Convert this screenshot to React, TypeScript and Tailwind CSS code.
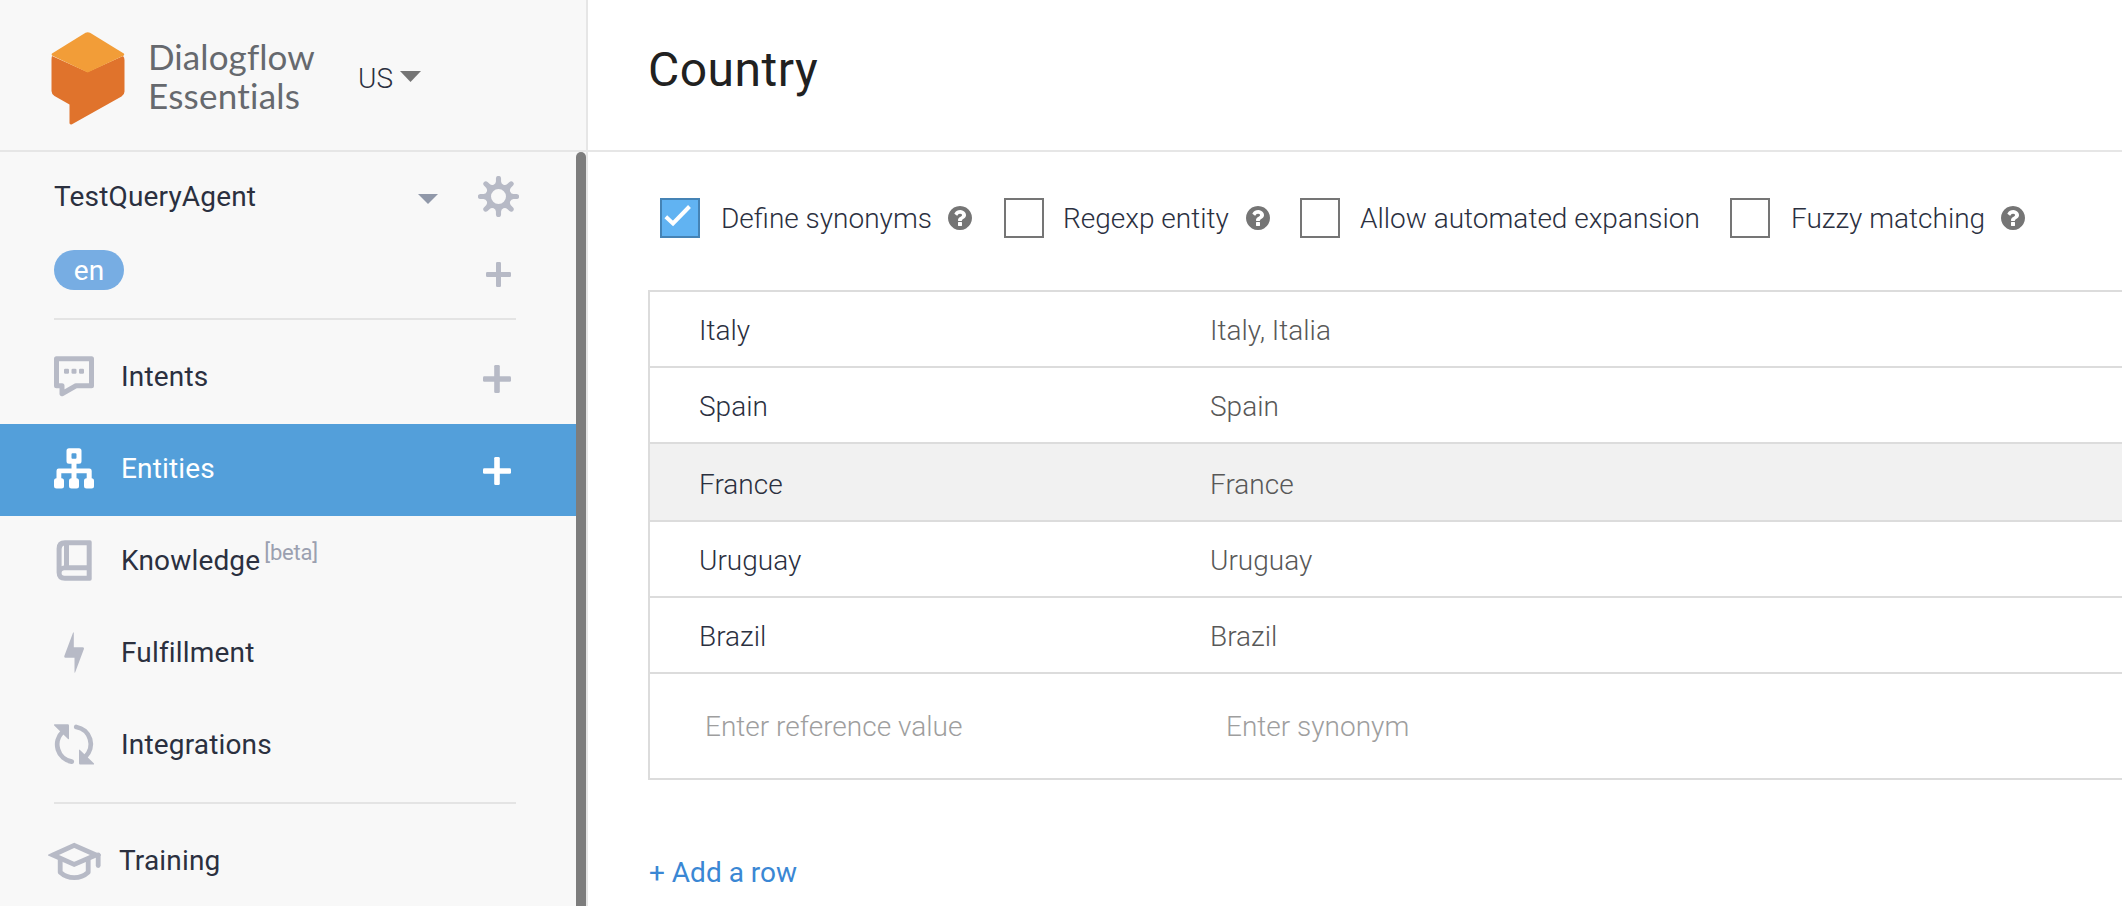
import type { ReactNode } from "react";

function Logo() {
  return (
    <svg width="74" height="93" viewBox="0 0 74 93" className="shrink-0">
      <path
        d="M1 24 L36.5 40 L72 24 Q73.5 25.500 73.500 28 V59.500 Q73.500 62.500 70.500 64.500 L21 92.300 Q18.500 93 18.500 91 V72.500 L3.500 64 Q.5 62 .5 59 V28 Q.5 25.500 1 24Z"
        fill="#e0732c"
      />
      <path d="M34.500 .8 Q36.700 -.4 39 .8 L72.800 21.500 Q73.600 22.500 72.800 23.500 L36.700 40.500 L1 23.500 Q.3 22.500 1 21.500Z" fill="#f29d38" />
    </svg>
  );
}

function HelpIcon() {
  return (
    <svg viewBox="0 0 1536 1536" fill="#757575" className="ml-auto h-6 w-6 shrink-0">
      <path d="M896 1248v-192q0-14-9-23t-23-9h-192q-14 0-23 9t-9 23v192q0 14 9 23t23 9h192q14 0 23-9t9-23zm256-672q0-88-55.500-163t-138.500-116-170-41q-243 0-371 213-15 24 8 42l132 100q7 6 19 6 16 0 25-12 53-68 86-92 34-24 86-24 48 0 85.500 26t37.500 59q0 38-20 61t-68 45q-63 28-115.500 86.500t-52.500 125.500v36q0 14 9 23t23 9h192q14 0 23-9t9-23q0-19 21.500-49.500t54.500-49.500q32-18 49-28.500t46-35 44.500-48 28-60.500 12.500-81zm384 192q0 209-103 385.500t-279.500 279.500-385.500 103-385.500-103-279.500-279.500-103-385.500 103-385.500 279.500-279.500 385.500-103 385.500 103 279.500 279.500 103 385.500z" />
    </svg>
  );
}

function gearPath() {
  const parts: string[] = [];
  const at = (x: number, y: number, a: number) => {
    const c = Math.cos(a);
    const s = Math.sin(a);
    return `${(20 + x * c - y * s).toFixed(2)} ${(20 + x * s + y * c).toFixed(2)}`;
  };
  for (let k = 0; k < 8; k++) {
    const a = (k * Math.PI) / 4;
    parts.push(`${k ? "L" : "M"}${at(-2.5, -14.6, a)}`);
    parts.push(`L${at(-2.5, -17.6, a)}`);
    parts.push(`A2.5 2.5 0 0 1 ${at(2.5, -17.6, a)}`);
    parts.push(`L${at(2.5, -14.6, a)}`);
    parts.push(`Q${at(2.7, -12.3, a)} ${at(0, -12.4, a + Math.PI / 8)}`);
    parts.push(`Q${at(-2.7, -12.3, a + Math.PI / 4)} ${at(-2.5, -14.6, a + Math.PI / 4)}`);
  }
  return parts.join("") + "Z M12.7 20a7.3 7.3 0 1 0 14.600 0a7.300 7.300 0 1 0 -14.600 0Z";
}

function GearIcon() {
  return (
    <svg width="41" height="41" viewBox="0 0 40 40" fill="#b7bac6" fillRule="evenodd">
      <path d={gearPath()} />
    </svg>
  );
}

function PlusIcon({ size }: { size: number }) {
  return (
    <svg width={size} height={size} viewBox="0 0 25 25" fill="currentColor">
      <rect x="0" y="10" width="25" height="5" rx="1.2" />
      <rect x="10" y="0" width="5" height="25" rx="1.2" />
    </svg>
  );
}

function IntentsIcon() {
  return (
    <svg width="41" height="41" viewBox="0 0 41 41" fill="none" stroke="currentColor" strokeWidth="5" strokeLinejoin="round">
      <path d="M2.500 2.800H37.500V29.800H22L8 37.700V29.800H2.500Z" />
      <g fill="currentColor" stroke="none">
        <rect x="10" y="12.700" width="5" height="5" rx="1.300" />
        <rect x="17.500" y="12.700" width="5" height="5" rx="1.300" />
        <rect x="25" y="12.700" width="5" height="5" rx="1.300" />
      </g>
    </svg>
  );
}

function EntitiesIcon() {
  return (
    <svg width="41" height="41" viewBox="0 0 41 41" fill="currentColor">
      <path
        fillRule="evenodd"
        d="M15 .3H25Q27.500 .3 27.500 2.800V13.200Q27.500 15.700 25 15.700H15Q12.500 15.700 12.500 13.200V2.800Q12.500 .3 15 .3ZM18.500 5.300Q17.500 5.300 17.500 6.300V9.700Q17.500 10.700 18.500 10.700H21.500Q22.500 10.700 22.500 9.700V6.300Q22.500 5.300 21.500 5.300Z"
      />
      <rect x="17.500" y="15" width="5" height="17" />
      <path d="M4.700 20.400H35.300Q37.700 20.400 37.700 22.800V32H32.700V25.300H7.300V32H2.500V22.800Q2.500 20.400 4.700 20.400Z" />
      <rect x="0" y="30.300" width="10" height="10.300" rx="2.500" />
      <rect x="15" y="30.300" width="10" height="10.300" rx="2.500" />
      <rect x="30" y="30.300" width="10" height="10.300" rx="2.500" />
    </svg>
  );
}

function KnowledgeIcon() {
  return (
    <svg width="41" height="41" viewBox="0 0 41 41" fill="currentColor">
      <path
        fillRule="evenodd"
        d="M11 .2H36Q37.700 .2 37.700 1.900V39Q37.700 40.700 36 40.700H11Q2.600 40.700 2.600 32.300V8.600Q2.600 .2 11 .2ZM15 5.200V25.300H32.700V5.200ZM10 5.600Q7.600 6.300 7.600 9V26.200Q8.700 25.600 10 25.400ZM10.300 30.300Q7.600 30.300 7.600 33Q7.600 35.700 10.300 35.700H32.700V30.300Z"
      />
    </svg>
  );
}

function FulfillmentIcon() {
  return (
    <svg width="41" height="41" viewBox="0 0 41 41" fill="currentColor">
      <path d="M19 .8Q19.800 -.3 19.800 1V15.300H28.500Q30.300 15.300 29.900 16.900L21.200 40.200Q20.500 41.300 20.500 40V25.700H11.500Q10 25.700 10.300 24Z" />
    </svg>
  );
}

function IntegrationsIcon() {
  return (
    <svg width="41" height="41" viewBox="0 0 41 41" fill="none" stroke="currentColor" strokeWidth="4.800" strokeLinecap="round">
      <path d="M8.800 7.800A17.400 17.400 0 0 0 17.700 37.700" />
      <path d="M22.300 3A17.400 17.400 0 0 1 31.200 32.900" />
      <g fill="currentColor" stroke="none">
        <path d="M.8 .2H13.700Q15 .2 15 1.500V14.500Q15 15.900 14 14.900L.2 1.500Q-.6 .3 .8 .2Z" />
        <path d="M39.200 40.600H26.300Q25 40.600 25 39.300V26.300Q25 24.900 26 25.900L39.800 39.300Q40.600 40.500 39.200 40.600Z" />
      </g>
    </svg>
  );
}

function TrainingIcon() {
  return (
    <svg width="53" height="40" viewBox="0 0 53 40" fill="none" stroke="currentColor" strokeWidth="4.800" strokeLinejoin="round">
      <path d="M5 13L26.200 3.300L48 13L26.200 22.500Z" strokeLinejoin="miter" />
      <path d="M50.200 13V23.500" strokeLinecap="round" />
      <path d="M12.200 17V30.300Q18 35.700 26.200 35.700T40.200 30.300V17" />
    </svg>
  );
}

function NavRow({ icon, label, active, add, beta }: { icon: ReactNode; label: string; active?: boolean; add?: boolean; beta?: boolean }) {
  return (
    <div className={active ? "flex h-[92px] items-center bg-[#539fda] pl-[54px] text-white" : "flex h-[92px] items-center pl-[54px] text-[#b7bac6]"}>
      <div className="flex w-[67px] shrink-0 pb-[3px]">{icon}</div>
      <div className={active ? "flex flex-1 pb-[3px] text-white" : "flex flex-1 pb-[3px] text-[#2b303f]"}>
        {label}
        {beta && <span className="-mt-2 ml-1 text-[22px] leading-[33px] tracking-[-0.2px] text-[#9ba0b0]">[beta]</span>}
      </div>
      {add && (
        <div className="mr-[65px] pt-[2px]">
          <PlusIcon size={28} />
        </div>
      )}
    </div>
  );
}

function Option({ label, checked, help, className }: { label: string; checked?: boolean; help?: boolean; className: string }) {
  return (
    <div className={className}>
      <div className={checked ? "h-10 w-10 shrink-0 border-2 border-[#4583b5] bg-[#61b3f2]" : "h-10 w-10 shrink-0 border-2 border-[#757575]"}>
        {checked && (
          <svg width="36" height="36" viewBox="2 2 36 36" fill="none" stroke="#fff" strokeWidth="4">
            <path d="M5.800 18.800L13 25.500L29.500 8.500" />
          </svg>
        )}
      </div>
      <span className="-mr-5 whitespace-nowrap">{label}</span>
      {help && <HelpIcon />}
    </div>
  );
}

const rows = [
  { value: "Italy", synonyms: "Italy, Italia" },
  { value: "Spain", synonyms: "Spain" },
  { value: "France", synonyms: "France", hover: true },
  { value: "Uruguay", synonyms: "Uruguay" },
  { value: "Brazil", synonyms: "Brazil" },
];

export default function App() {
  return (
    <div className="flex h-[906px] w-[2122px] overflow-hidden bg-white font-['Roboto',sans-serif] text-[28px] leading-[33px] text-[#2b303f]">
      <aside className="flex w-[588px] shrink-0 flex-col border-r-2 border-[#e6e6e6] bg-[#f8f8f8]">
        <div className="flex h-[152px] shrink-0 border-b-2 border-[#e6e6e6] pt-8 pl-[51px]">
          <Logo />
          <div className="ml-[23px] w-[185px] pt-[5px] font-['Lato',sans-serif] text-[35px] leading-[39px] text-[#66696e]">
            <div className="tracking-[0.1px]">Dialogflow</div>
            <div className="tracking-[0.25px]">Essentials</div>
          </div>
          <div className="ml-[25px] flex h-[33px] items-start pt-[30px] font-light">
            US
            <svg width="21" height="11" viewBox="0 0 21 11" className="mt-[9px] ml-[7px]" fill="#757575">
              <path d="M0 0H21L10.500 11Z" />
            </svg>
          </div>
        </div>
        <div className="flex min-h-0 flex-1">
          <nav className="flex w-[576px] flex-col tracking-[0.17px]">
            <div className="flex h-[98px] shrink-0 pt-6 pl-[54px]">
              <div className="w-[364px] pt-1">TestQueryAgent</div>
              <svg width="20" height="10" viewBox="0 0 20 10" className="mt-[18px] mr-[40px]" fill="#9098a9">
                <path d="M0 0H20L10 10Z" />
              </svg>
              <GearIcon />
            </div>
            <div className="mr-[60px] ml-[54px] flex h-[70px] shrink-0 justify-between border-b-2 border-[#e4e4e4]">
              <div className="flex h-10 w-[70px] justify-center rounded-full bg-[#77ade3] pt-1 text-white">en</div>
              <div className="mr-[5px] pt-3 text-[#b7bac6]">
                <PlusIcon size={25} />
              </div>
            </div>
            <div className="pt-3">
              <NavRow icon={<IntentsIcon />} label="Intents" add />
              <NavRow icon={<EntitiesIcon />} label="Entities" active add />
              <NavRow icon={<KnowledgeIcon />} label="Knowledge" beta />
              <NavRow icon={<FulfillmentIcon />} label="Fulfillment" />
              <NavRow icon={<IntegrationsIcon />} label="Integrations" />
            </div>
            <div className="mt-[10px] mr-[60px] ml-[54px] h-[2px] shrink-0 bg-[#e4e4e4]" />
            <div className="flex pt-[38px] pl-[48px] text-[#b7bac6]">
              <TrainingIcon />
              <span className="ml-[18px] pt-[2px] text-[#2b303f]">Training</span>
            </div>
          </nav>
          <div className="w-[10px] rounded-t-full bg-[#7d7d7d]" />
        </div>
      </aside>

      <main className="flex flex-1 flex-col">
        <header className="h-[152px] shrink-0 border-b-2 border-[#e6e6e6] pt-[42px] pl-[60px]">
          <h1 className="text-[48px] leading-[56px] tracking-[0.5px] text-[#212121]">Country</h1>
        </header>
        <div className="flex pt-[46px] pl-[72px] font-light">
          <Option className="mr-8 flex w-[312px] items-center gap-[21px]" label="Define synonyms" checked help />
          <Option className="mr-[30px] flex w-[266px] items-center gap-[19px]" label="Regexp entity" help />
          <Option className="mr-[30px] flex w-[400px] items-center gap-5" label="Allow automated expansion" />
          <Option className="flex w-[295px] items-center gap-[21px]" label="Fuzzy matching" help />
        </div>
        <div className="mt-[52px] ml-[60px] border-y-2 border-l-2 border-[#dcdcdc] font-light">
          {rows.map((row) => (
            <div
              key={row.value}
              className={
                row.hover
                  ? "flex h-[78px] border-b-2 border-[#dcdcdc] bg-[#f1f1f1] pt-6 pl-[49px]"
                  : "flex h-[76px] border-b-2 border-[#dcdcdc] pt-[22px] pl-[49px]"
              }
            >
              <div className="w-[511px]">{row.value}</div>
              <div className="text-[#585858]">{row.synonyms}</div>
            </div>
          ))}
          <div className="flex h-[104px] pt-9 pl-[55px] text-[#9e9e9e]">
            <div className="w-[521px]">Enter reference value</div>
            <div>Enter synonym</div>
          </div>
        </div>
        <button className="mt-[76px] ml-[61px] self-start text-[#3a87d4]">+ Add a row</button>
      </main>
    </div>
  );
}
